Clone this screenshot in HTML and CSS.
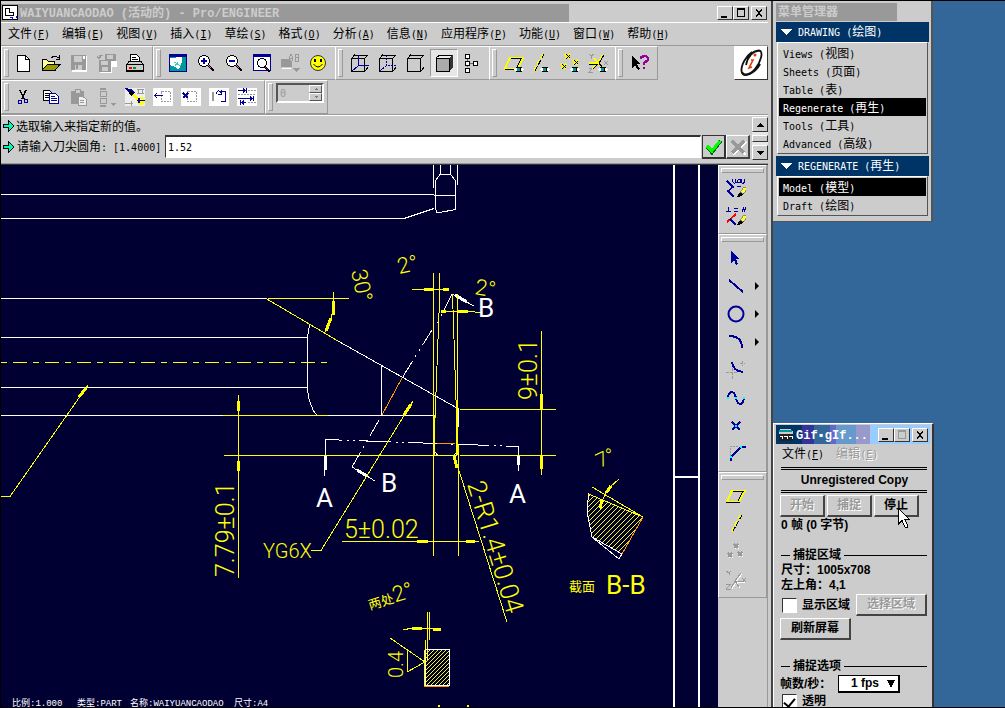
FILE: index.html
```html
<!DOCTYPE html>
<html lang="zh-CN">
<head>
<meta charset="utf-8">
<title>WAIYUANCAODAO - Pro/ENGINEER</title>
<link rel="stylesheet" href="styles.css">
</head>
<body>
<svg class="defs" aria-hidden="true">
  <defs>
    <symbol id="eye" viewBox="0 0 10 7"><path d="M0 3.500L3 1H7L10 3.500L7 6H3Z" fill="#fff"/><path d="M2 1.500H8M2 5.500H8" stroke="#000"/><rect x="3" y="1" width="4" height="5" fill="#000"/><rect x="3" y="2" width="3" height="3" fill="#099"/></symbol>
    <symbol id="pencil" viewBox="0 0 10 10"><path d="M0 10L2 6L5 9Z" fill="#000"/><path d="M2 6L4 4L7 7L4 9Z" fill="#000"/><path d="M3 5L7 0L10 2L6 7Z" fill="#ffff33" stroke="#666" stroke-width=".7"/></symbol>
  </defs>
</svg>
<div class="desktop">
  <main class="window main">
    <header class="title-row">
      <div class="title-bar">
        <svg class="app-icon" viewBox="0 0 16 16"><rect x=".5" y=".5" width="15" height="14" fill="#fff" stroke="#000"/><path d="M3.500 3.500H7.500V7.500H11.500V10.500H3.500Z" fill="none" stroke="#000"/><path d="M7.500 12.500H10.500V14.500M14.500 11V13" fill="none" stroke="#00f"/></svg>
        <h1><span class="mono-b">WAIYUANCAODAO (</span>活动的<span class="mono-b">) - Pro/ENGINEER</span></h1>
      </div>
      <div class="win-buttons">
        <button aria-label="最小化"><svg viewBox="0 0 12 10"><path d="M2 8.500H8" stroke="#000" stroke-width="2"/></svg></button>
        <button aria-label="最大化"><svg viewBox="0 0 12 10"><path d="M2 1H10" stroke="#000" stroke-width="2"/><rect x="2.500" y="1.500" width="7" height="7" fill="none" stroke="#000"/></svg></button>
        <button class="close" aria-label="关闭"><svg viewBox="0 0 12 10"><path d="M3 1.500L9 8.500M9 1.500L3 8.500" stroke="#000" stroke-width="1.500"/></svg></button>
      </div>
    </header>
    <nav class="menu-bar">
      <button>文件<span class="mono">(<u>F</u>)</span></button>
      <button>编辑<span class="mono">(<u>E</u>)</span></button>
      <button>视图<span class="mono">(<u>V</u>)</span></button>
      <button>插入<span class="mono">(<u>I</u>)</span></button>
      <button>草绘<span class="mono">(<u>S</u>)</span></button>
      <button>格式<span class="mono">(<u>O</u>)</span></button>
      <button>分析<span class="mono">(<u>A</u>)</span></button>
      <button>信息<span class="mono">(<u>N</u>)</span></button>
      <button>应用程序<span class="mono">(<u>P</u>)</span></button>
      <button>功能<span class="mono">(<u>U</u>)</span></button>
      <button>窗口<span class="mono">(<u>W</u>)</span></button>
      <button>帮助<span class="mono">(<u>H</u>)</span></button>
    </nav>
    <section class="toolbars">
      <div class="tool-rows">
        <div class="tool-row">
          <div class="group first">
            <button class="tool" aria-label="新建"><svg viewBox="0 0 20 20"><path d="M4.500 2.500H12.500L16.500 6.500V18.500H4.500Z" fill="#fff" stroke="#000"/><path d="M12.500 2.500V6.500H16.500" fill="none" stroke="#000"/></svg></button>
            <button class="tool" aria-label="打开"><svg viewBox="0 0 20 20"><path d="M1.500 16.500V6.500H5.500L7.500 8.500H13.500V11" fill="#ffff99" stroke="#000"/><path d="M1.500 16.500L6.500 11.500H19L14 17.500H2Z" fill="#999900" stroke="#000"/><path d="M10.500 5Q13.500 1 17.500 5M18.500 2V6H15" fill="none" stroke="#000"/></svg></button>
            <button class="tool" aria-label="保存"><svg viewBox="0 0 20 20"><rect x="3" y="3" width="15" height="16" fill="#fff"/><rect x="2" y="2" width="15" height="15" fill="#999"/><rect x="5" y="3" width="8" height="6" fill="#ccc"/><rect x="6" y="12" width="7" height="5" fill="#ccc"/><rect x="7" y="12" width="2" height="4" fill="#999"/><rect x="14" y="3" width="2" height="3" fill="#fff"/></svg></button>
            <button class="tool" aria-label="保存副本"><svg viewBox="0 0 20 20"><rect x="8" y="1" width="11" height="11" fill="#999"/><rect x="10" y="2" width="6" height="4" fill="#ccc"/><rect x="15" y="8" width="5" height="6" fill="#fff"/><rect x="3" y="8" width="12" height="12" fill="#fff"/><rect x="2" y="7" width="12" height="12" fill="#999"/><rect x="4" y="8" width="7" height="4" fill="#ccc"/><rect x="5" y="14" width="6" height="4" fill="#ccc"/><path d="M2 5V2H6M0 3L2 6L4 3" fill="none" stroke="#999"/></svg></button>
            <button class="tool" aria-label="打印"><svg viewBox="0 0 20 20"><path d="M5.500 9.500V1.500H11.500L14.500 4.500V9.500" fill="#fff" stroke="#000"/><path d="M7 4.500H11M7 6.500H13" stroke="#000"/><path d="M1.500 11.500L4 8.500H16L18.500 11.500V17.500H1.500Z" fill="#ccc" stroke="#000"/><path d="M1 11.500H19" stroke="#000"/><path d="M1 17.500H19" stroke="#000" stroke-width="2"/><path d="M4 14.500H7" stroke="#f00" stroke-width="2"/><path d="M8 14.500H11" stroke="#090" stroke-width="2"/></svg></button>
          </div>
          <div class="group">
            <button class="tool" aria-label="重画"><svg viewBox="0 0 20 20"><rect x="1" y="1" width="18" height="18" fill="#099"/><path d="M1 2H19" stroke="#009" stroke-width="3"/><path d="M1.500 2V18.500H18.500V2" fill="none" stroke="#009"/><path d="M2 5L14 4Q15 10 10 17L7 14L2 12Z" fill="#fff"/><path d="M6 9L13 13M10 9L7 13" stroke="#3cc"/></svg></button>
            <button class="tool" aria-label="放大"><svg viewBox="0 0 20 20"><circle cx="8" cy="8" r="5.500" fill="#fff" stroke="#000"/><path d="M5 8H11M8 5V11" stroke="#009" stroke-width="2"/><path d="M12 12L18 18" stroke="#000" stroke-width="2.500"/><path d="M12 12L15 15" stroke="#c6c" stroke-width="1"/></svg></button>
            <button class="tool" aria-label="缩小"><svg viewBox="0 0 20 20"><circle cx="8" cy="8" r="5.500" fill="#fff" stroke="#000"/><path d="M5 8H11" stroke="#009" stroke-width="2"/><path d="M12 12L18 18" stroke="#000" stroke-width="2.500"/><path d="M12 12L15 15" stroke="#c6c" stroke-width="1"/></svg></button>
            <button class="tool" aria-label="重新调整"><svg viewBox="0 0 20 20"><rect x="1.500" y="1.500" width="17" height="16" fill="#fff" stroke="#009"/><path d="M1 2.500H19" stroke="#009" stroke-width="3"/><circle cx="10" cy="10" r="4.500" fill="#fff" stroke="#000"/><path d="M13 14L18 19" stroke="#000" stroke-width="2.500"/><path d="M13 14L16 17" stroke="#909"/></svg></button>
            <button class="tool" aria-label="视图列表"><svg viewBox="0 0 20 20"><path d="M1 6H9L12 8V14H1Z" fill="#999"/><path d="M2 15.500H11" stroke="#fff"/><path d="M9.500 8V4L11 1.500L12.500 4V8M10 5.500H13M15.500 1.500V8M15 1.500H18V4.500H16M18.500 5V8H15" fill="none" stroke="#999"/><path d="M13 15H20L16.500 19Z" fill="#999"/></svg></button>
            <button class="tool" aria-label="笑脸"><svg viewBox="0 0 20 20" class="smooth"><circle cx="10" cy="10" r="7.500" fill="#ff0" stroke="#333"/><rect x="6" y="6" width="2" height="3"/><rect x="12" y="6" width="2" height="3"/><path d="M5.500 11Q10 17 14.500 11" fill="none" stroke="#000"/></svg></button>
          </div>
          <div class="group">
            <button class="tool" aria-label="线框"><svg viewBox="0 0 20 20"><path d="M1.500 5.500H14.500V18.500H1.500ZM1.500 5.500L5 1.500M14.500 5.500L18 2M14.500 18.500L18 14.500M5 2.500H18" fill="none" stroke="#000"/><path d="M8.500 2V12.500H19M8.500 12.500L2 18" fill="none" stroke="#009"/></svg></button>
            <button class="tool" aria-label="隐藏线"><svg viewBox="0 0 20 20"><path d="M1.500 5.500H14.500V18.500H1.500ZM1.500 5.500L5 1.500M14.500 5.500L18 2M14.500 18.500L18 14.500M5 2.500H18" fill="none" stroke="#000"/><path d="M8.500 2V12.500H19M8.500 12.500L2 18" fill="none" stroke="#009" stroke-dasharray="2 1"/></svg></button>
            <button class="tool" aria-label="无隐藏线"><svg viewBox="0 0 20 20"><path d="M1.500 5.500H14.500V18.500H1.500ZM1.500 5.500L5 1.500M14.500 5.500L18 2M14.500 18.500L18 14.500M5 2.500H18" fill="none" stroke="#000"/></svg></button>
            <button class="tool pressed" aria-label="着色"><svg viewBox="0 0 20 20"><path d="M2 5L5 2H18L15 6Z" fill="#eee"/><path d="M15 5L18.500 2V15L15 19Z" fill="#333"/><rect x="2.500" y="5.500" width="13" height="13" fill="#aaa" stroke="#000"/><path d="M2 5L5 2.500H18" fill="none" stroke="#000"/></svg></button>
            <button class="tool" aria-label="模型树"><svg viewBox="0 0 20 20"><path d="M5.500 5V14M5 10.500H13" stroke="#666"/><g fill="#fff" stroke="#000"><rect x="3.500" y="1.500" width="4" height="4"/><rect x="3.500" y="8.500" width="4" height="4"/><rect x="3.500" y="15.500" width="4" height="4"/><rect x="11.500" y="8.500" width="4" height="4"/></g></svg></button>
          </div>
          <div class="group">
            <button class="tool" aria-label="基准平面"><svg viewBox="0 0 20 20"><path d="M6 4.500H19L14 15.500H1Z" fill="none" stroke="#ff0" stroke-width="2"/><path d="M7 5.500H18M1 16.500H11M13 14L17 6" fill="none" stroke="#000"/><use href="#eye" x="10" y="13" width="10" height="7"/></svg></button>
            <button class="tool" aria-label="基准轴"><svg viewBox="0 0 20 20"><path d="M11 1L1 20" stroke="#ff0" stroke-width="2" stroke-dasharray="5 2"/><path d="M12 1L2 20" stroke="#000" stroke-dasharray="5 2"/><use href="#eye" x="8" y="13" width="10" height="7"/></svg></button>
            <button class="tool" aria-label="基准点"><svg viewBox="0 0 20 20"><g id="marks"><path d="M5 1L10 6M10 1L5 6M13 7L18 12M18 7L13 12M1 11L6 16M6 11L1 16" stroke="#ff0" stroke-width="2.500"/><path d="M6 1L10 5M10 2L6 6M14 7L18 11M18 8L14 12M2 11L6 15M6 12L2 16" stroke="#000"/></g><use href="#eye" x="10" y="13" width="10" height="7"/></svg></button>
            <button class="tool" aria-label="坐标系"><svg viewBox="0 0 20 20"><path d="M1 1L3 3L6 1M3 3V6M16 8L20 12M20 8L16 12M1 15H5L1 19H5" fill="none" stroke="#999"/><path d="M10 10H1M10 10L15 2M10 10L4 16M10 10L14 15M10 10L6 5" stroke="#ff0" stroke-width="2"/><path d="M9 11H1M11 10L16 2M10 11L5 16M11 10L14 14" stroke="#000"/><use href="#eye" x="10" y="13" width="10" height="7"/></svg></button>
          </div>
          <div class="group">
            <button class="tool" aria-label="上下文帮助"><svg viewBox="0 0 20 20"><path d="M2 3V15L5 12L8 17L10 16L7 11H11Z" fill="#000"/><path d="M11 6V4H13V3H16L18 5V7L14 10V12M14 13.500V16" fill="none" stroke="#909" stroke-width="2.500"/></svg></button>
          </div>
        </div>
        <div class="tool-row">
          <div class="group first">
            <button class="tool" aria-label="剪切"><svg viewBox="0 0 20 20"><path d="M7 3L11 12M13 3L9 12" stroke="#000" stroke-width="1.500"/><circle cx="7" cy="15" r="2" fill="none" stroke="#009"/><circle cx="13" cy="14" r="2" fill="none" stroke="#009"/></svg></button>
            <button class="tool" aria-label="复制"><svg viewBox="0 0 20 20"><path d="M2.500 3.500H8.500L10.500 5.500V13.500H2.500Z" fill="#fff" stroke="#000"/><path d="M4 6.500H8M4 8.500H8M4 10.500H8" stroke="#000"/><path d="M8.500 6.500H14.500L17.500 9.500V16.500H8.500Z" fill="#fff" stroke="#009"/><path d="M10 9.500H14M10 11.500H16M10 13.500H16" stroke="#009"/></svg></button>
            <button class="tool" aria-label="粘贴"><svg viewBox="0 0 20 20"><rect x="2" y="4" width="13" height="13" rx="1" fill="#999"/><rect x="6" y="2" width="5" height="4" fill="#ccc" stroke="#999"/><path d="M9.500 9.500H14L17.500 12.500V18.500H9.500Z" fill="#eee" stroke="#999"/><path d="M11 13.500H15M11 15.500H15" stroke="#999"/></svg></button>
            <button class="tool" aria-label="选取过滤"><svg viewBox="0 0 20 20"><path d="M3 1.500H9M3 18.500H9" stroke="#999" stroke-width="2"/><rect x="3.500" y="4.500" width="6" height="5" rx="1" fill="none" stroke="#999" stroke-width="1.500"/><rect x="3.500" y="11.500" width="6" height="5" rx="1" fill="none" stroke="#999" stroke-width="1.500"/><path d="M13 16H19L16 19Z" fill="#999"/></svg></button>
            <button class="tool" aria-label="显示"><svg viewBox="0 0 20 20"><rect y="1" width="20" height="18" fill="#eee"/><path d="M6 6L17 16" stroke="#ff0" stroke-width="3"/><path d="M0 1L6 2L10 6L6 8Z" fill="#009"/><path d="M5 5L8 8" stroke="#000" stroke-width="3"/><path d="M12 2.500H19M12 6.500H19M13 3V6M17 3V6" stroke="#999"/><circle cx="16" cy="14" r="3" fill="none" stroke="#ff0" stroke-width="2"/><path d="M12 13.500H20M14 11V16" stroke="#009" stroke-width="1.500"/><path d="M0 16.500H8M6 14V19" stroke="#999"/></svg></button>
            <button class="tool" aria-label="移动"><svg viewBox="0 0 20 20"><rect y="1" width="20" height="18" fill="#fff"/><rect x="8.500" y="4.500" width="9" height="10" fill="none" stroke="#999" stroke-dasharray="2 1"/><path d="M2 8.500H10M4 6L1.500 8.500L4 11" fill="none" stroke="#009"/></svg></button>
            <button class="tool" aria-label="删除"><svg viewBox="0 0 20 20"><rect y="1" width="20" height="18" fill="#fff"/><rect x="6.500" y="4.500" width="9" height="10" fill="none" stroke="#999" stroke-dasharray="2 1"/><path d="M2 6L7 11M7 6L2 11" stroke="#009" stroke-width="1.500"/></svg></button>
            <button class="tool" aria-label="切换视图"><svg viewBox="0 0 20 20"><rect y="1" width="20" height="18" fill="#fff"/><path d="M3.500 5V14" stroke="#999" stroke-width="2"/><path d="M7 6.500Q9 2 12 5.500M12.500 3V7.500H9M13 4.500H16.500V14.500H12" fill="none" stroke="#009"/></svg></button>
            <button class="tool" aria-label="整理尺寸"><svg viewBox="0 0 20 20"><rect y="1" width="20" height="18" fill="#fff"/><path d="M11 3.500H19M1 7.500H19M11 15.500H19" stroke="#999" stroke-dasharray="2 1"/><path d="M1 3.500H9M9.500 1V6M1 11.500H17M16.500 9V14M4 15.500H9M3.500 13V18" stroke="#009"/><path d="M6 1L9 3.500L6 6ZM13 9L16 11.500L13 14ZM7 13L4 15.500L7 18Z" fill="#009"/></svg></button>
          </div>
          <div class="group spin-group">
            <label class="spinner"><input class="mono" type="text" value="0" disabled aria-label="页码"><span class="spin"><button disabled aria-label="增加"><svg viewBox="0 0 6 4"><path d="M3 1L5 3H1Z" fill="#777"/></svg></button><button disabled aria-label="减少"><svg viewBox="0 0 6 4"><path d="M3 3L5 1H1Z" fill="#777"/></svg></button></span></label>
          </div>
        </div>
      </div>
      <button class="logo" aria-label="Pro/ENGINEER"><svg class="smooth" viewBox="0 0 32 32"><path d="M11 18C13 9 18 4 24 3.500C29 4 26 15 20 22C14 29 7 30 6.500 24C6 18 11 9 17 5" fill="none" stroke="#111" stroke-width="1.800"/><path d="M7 25C9 31 20 26 25 17" fill="none" stroke="#111" stroke-width="2.200"/><path d="M16 13L18 13L14 21L17 20" fill="none" stroke="#e63c00" stroke-width="1.600"/><circle cx="20" cy="8" r="1.500" fill="#e63c00"/></svg></button>
    </section>
    <section class="message">
      <div class="message-body">
        <p><svg class="arrow" viewBox="0 0 12 12"><path d="M.5 4.500H5.500V.8L11 6L5.500 11.200V7.500H.5Z" fill="#00ff99" stroke="#003"/></svg>选取输入来指定新的值。</p>
        <form class="prompt">
          <label for="radius"><svg class="arrow" viewBox="0 0 12 12"><path d="M.5 4.500H5.500V.8L11 6L5.500 11.200V7.500H.5Z" fill="#00ff99" stroke="#003"/></svg><span class="prompt-text">请输入刀尖圆角<span class="mono">: [1.4000]</span></span></label>
          <input id="radius" class="mono" type="text" value="1.52">
          <button type="button" class="accept" aria-label="接受"><svg viewBox="0 0 20 20"><path d="M3 10L8 16L17 4" fill="none" stroke="#060" stroke-width="3"/><path d="M3 9L8 14L16 4" fill="none" stroke="#0f0" stroke-width="3"/></svg></button>
          <button type="button" aria-label="取消"><svg viewBox="0 0 20 20"><path d="M5 5L18 18M18 5L5 18" stroke="#fff" stroke-width="2"/><path d="M4 4L16 16M16 4L4 16" stroke="#999" stroke-width="3"/></svg></button>
        </form>
      </div>
      <div class="scroll">
        <button aria-label="向上"><svg viewBox="0 0 10 6"><path d="M5 1L9 5H1Z"/></svg></button>
        <span class="thumb"></span>
        <button aria-label="向下"><svg viewBox="0 0 10 6"><path d="M5 5L9 1H1Z"/></svg></button>
      </div>
    </section>
    <section class="work">
      <div class="canvas">
        <svg role="img" aria-label="工程图">
          <defs>
            <pattern id="hatch" width="4" height="4" patternUnits="userSpaceOnUse"><path d="M-1 1L1 -1M0 4L4 0M3 5L5 3" stroke="#ff0"/></pattern>
            <pattern id="hatch2" width="5" height="5" patternUnits="userSpaceOnUse"><path d="M-1 1L1 -1M0 5L5 0M4 6L6 4" stroke="#ff0"/></pattern>
          </defs>
          <g transform="translate(-1 -165)">
            <g class="white">
              <path d="M1 194.500H434M1 218.500H404L434 208.500M1 298.500H266M1 337.500H307M1 387.500H307M1 415.500H433"/>
              <path d="M433.500 165V188M457.500 165V185M440.500 165V174.500H451M450.500 165V174L455 180L456 188L455.500 209.500L437 213L435.500 209V186L436 180L440 174.500M434 195.500H456"/>
              <path d="M309.500 325L307.500 337V387L308.500 398L313 410L317 415.500M338 341L457 408M381.500 366V415"/>
              <path d="M452 294L436 326M432 330L402 378" stroke-dasharray="18 5 2 5 2 5"/><path d="M379 420L352 467" stroke-dasharray="18 5 2 5 2 5"/>
              <path d="M325.500 455V439.500L519 446.500" stroke-dasharray="32 5 2 4 2 4"/>
              <path d="M324.500 455V476M518.500 446V471M352 467L375 481M452 294L474 306M435 452L438 455.500H454L457 452M456.500 408V428"/>
              <path d="M325 455V470M518 455V465M357 470L367 476M455 295L467 302M457 408V427" class="thick"/>
              <path d="M674 165V707M699 165V707M674 477H699" class="bold"/>
            </g>
            <path class="orange" d="M402 378L382 415M437 443.500H455M643 517L622 554M424 686.500H449"/>
            <g class="yellow">
              <path d="M1 362.500H327" stroke-dasharray="14 6 6 6" stroke-dashoffset="20"/>
              <path d="M268 298.500H349M266 298.500L338 341M333.500 292V303Q333 318 325 332M223 415.500H328M1 496.500H10L88 385"/>
              <path d="M238.500 395V578M224 455.500H457M460 455.500H556M541.500 331V475M460 409.500H556"/>
              <path d="M433.500 273V556M439.500 273V300L434 445M452.500 294L457 430M457.500 294V445M458.500 445V556"/>
              <path d="M412 289.500H449M441 311.500H468L482 312.500M311 550.500H321L413 401M342 541.500H479M454 455L507 622"/>
              <path d="M592 487L643 517M619 479L610 487Q602 497 600 510"/>
              <path d="M427.500 612V660M429.500 612V640M403 630L412 628H430L441 630M390 638L425 662L407 672V650M426 640L424 686"/>
              <path class="thick" d="M333 301V315M331 318L326 331M79 397L86 388M238 401V411M238 461V471M541 394V409M541 456V469M424 289H434M443 289.500H449M441 311.500H446M458 311H468M404 415L411 404M417 541H428M466 541H475M454 456L457 468M611 486L606 493M602 500L600 508M412 628H422M433 629H441"/>
              <path class="bold" d="M434 415V455M457 427V455M425 650V686M438 706H440M467 706H469"/>
            </g>
            <path class="white section" d="M588.500 494L643 517L622 554L592 537L587 512Z"/>
            <path class="white" d="M592 537L619 559L622 554"/>
            <path class="yellow" d="M588.500 494L643 517"/><path class="orange" d="M643 517L622 554"/>
            <rect class="white tip" x="425.500" y="649.500" width="24" height="36"/>
            <g class="note">
              <text transform="translate(399 274) rotate(-12)" class="angle">2°</text>
              <text transform="translate(474 294) rotate(10)" class="angle">2°</text>
              <text transform="translate(351 271) rotate(78)" class="angle">30°</text>
              <text transform="translate(537 400) rotate(-90)">9±0.1</text>
              <text transform="translate(234 577) rotate(-90)">7.79±0.1</text>
              <text x="344" y="538">5±0.02</text>
              <text x="263" y="558" class="small">YG6X</text>
              <text transform="translate(467 484) rotate(73)" class="long">2-R1.4±0.04</text>
              <text transform="translate(600 468) rotate(-25)" class="small">7°</text>
              <text transform="translate(370 610) rotate(-17)" class="angle"><tspan class="cjk">两处</tspan>2°</text>
              <text transform="translate(403 678) rotate(-90)" class="small">0.4</text>
              <text x="569" y="591" class="cjk">截面</text>
              <text x="606" y="594" class="mark">B-B</text>
            </g>
            <g class="note letters">
              <text x="478" y="317" class="mark">B</text>
              <text x="381" y="492" class="mark">B</text>
              <text x="316" y="507" class="mark">A</text>
              <text x="509" y="503" class="mark">A</text>
            </g>
            <g class="status">
              <text x="12" y="706">比例:1.000</text>
              <text x="77" y="706">类型:PART</text>
              <text x="130" y="706">名称:WAIYUANCAODAO</text>
              <text x="234" y="706">尺寸:A4</text>
            </g>
          </g>
        </svg>
      </div>
      <aside class="side-tools">
        <div class="vgroup sketch">
          <button class="tool" aria-label="草绘"><svg viewBox="0 0 20 20"><path d="M1 3L7 9L2 13L8 19" fill="none" stroke="#009" stroke-width="1.500"/><path d="M7 1Q6 4 9 6M10 1Q8 4 11 5M18 1Q20 4 16 6M15 1Q17 4 14 5M11 8H15" fill="none" stroke="#009"/><circle cx="13" cy="3" r="1.500" fill="none" stroke="#009"/><use href="#pencil" x="11" y="9" width="10" height="10"/></svg></button>
          <button class="tool" aria-label="约束"><svg viewBox="0 0 20 20"><path d="M2.500 1V5M0 5.500H5M8 2.500H12M8 5.500H12M16 6L18 1M18 6L20 1" stroke="#009"/><path d="M1 16L10 8" stroke="#f00" stroke-width="1.800"/><path d="M4 13L10 19" stroke="#009" stroke-width="1.500"/><use href="#pencil" x="11" y="9" width="10" height="10"/></svg></button>
        </div>
        <div class="vgroup">
          <button class="tool" aria-label="选取"><svg viewBox="0 0 20 20"><path d="M5 2V15L8 12L10 17L12 16L10 11H13Z" fill="#009"/></svg></button>
          <div class="pair"><button class="tool" aria-label="直线"><svg viewBox="0 0 20 20"><path d="M3 4L17 16" stroke="#009" stroke-width="2"/></svg></button><button class="more" aria-label="更多直线"></button></div>
          <div class="pair"><button class="tool" aria-label="圆"><svg viewBox="0 0 20 20" class="smooth"><circle cx="10" cy="10" r="7.500" fill="none" stroke="#009" stroke-width="2"/></svg></button><button class="more" aria-label="更多圆"></button></div>
          <div class="pair"><button class="tool" aria-label="圆弧"><svg viewBox="0 0 20 20"><path d="M3 4Q16 4 16 16" fill="none" stroke="#009" stroke-width="2"/></svg></button><button class="more" aria-label="更多圆弧"></button></div>
          <button class="tool" aria-label="圆角"><svg viewBox="0 0 20 20"><path d="M6 2Q7 11 17 12" fill="none" stroke="#009" stroke-width="2"/><path d="M14 3.500H19M16.500 1V6M0 12.500H12M6.500 8V20" stroke="#999" stroke-dasharray="3 1"/></svg></button>
          <button class="tool" aria-label="样条"><svg viewBox="0 0 20 20"><path d="M2 10C3 2 8 2 10 10C12 18 17 18 18 10" fill="none" stroke="#009" stroke-width="2"/><path d="M1 9H3V11H1ZM9 9H11V11H9ZM17 9H19V11H17Z" fill="#0ff"/></svg></button>
          <button class="tool" aria-label="点"><svg viewBox="0 0 20 20"><path d="M6 6L14 14M14 6L6 14" stroke="#009" stroke-width="2"/><rect x="9" y="9" width="2" height="2" fill="#0ff"/></svg></button>
          <button class="tool" aria-label="边"><svg viewBox="0 0 20 20"><path d="M4.500 12V2.500H13" fill="none" stroke="#999" stroke-dasharray="2 1"/><path d="M5 17V13L15 3H20" fill="none" stroke="#009" stroke-width="2"/><path d="M4 12H6V14H4ZM14 2H16V4H14Z" fill="#0ff"/></svg></button>
        </div>
        <div class="vgroup">
          <button class="tool" aria-label="平面"><svg viewBox="0 0 20 20"><path d="M6 4.500H19L13 15.500H1Z" fill="none" stroke="#ff0" stroke-width="2"/><path d="M7 5.500H17L12 14.500M14 16.500H0" fill="none" stroke="#000"/></svg></button>
          <button class="tool" aria-label="轴"><svg viewBox="0 0 20 20"><path d="M15 1L5 19" stroke="#ff0" stroke-width="2.500" stroke-dasharray="5 2"/><path d="M16 1L6 19" stroke="#000" stroke-dasharray="5 2"/></svg></button>
          <button class="tool" aria-label="点阵"><svg viewBox="0 0 20 20"><path d="M9 3L13 7M13 3L9 7M3 12L7 16M7 12L3 16M13 11L17 15M17 11L13 15" stroke="#fff" stroke-width="1"/><path d="M8 2L12 6M12 2L8 6M2 11L6 15M6 11L2 15M12 10L16 14M16 10L12 14" stroke="#999" stroke-width="1.500"/></svg></button>
          <button class="tool" aria-label="坐标"><svg viewBox="0 0 20 20"><path d="M10 12L16 4M10 12L6 19M10 12H19M10 12L14 18" stroke="#fff" stroke-width="1"/><path d="M0 1L3 3L5 1M3 3V5M16 8L20 12M20 8L16 12M0 14H5L0 19H5M9 11L15 3M9 11L5 18M9 11H18M9 11L13 17" fill="none" stroke="#999"/></svg></button>
        </div>
      </aside>
    </section>
  </main>
  <div class="side">
    <section class="window manager">
      <h2>菜单管理器</h2>
      <h3><svg viewBox="0 0 12 6"><path d="M0 0H12L6 6Z" fill="#fff"/></svg><span><span class="mono">DRAWING (</span>绘图<span class="mono">)</span></span></h3>
      <div class="options">
        <button><span class="mono">Views (</span>视图<span class="mono">)</span></button>
        <button><span class="mono">Sheets (</span>页面<span class="mono">)</span></button>
        <button><span class="mono">Table (</span>表<span class="mono">)</span></button>
        <button class="on"><span class="mono">Regenerate (</span>再生<span class="mono">)</span></button>
        <button><span class="mono">Tools (</span>工具<span class="mono">)</span></button>
        <button><span class="mono">Advanced (</span>高级<span class="mono">)</span></button>
      </div>
      <h3><svg viewBox="0 0 12 6"><path d="M0 0H12L6 6Z" fill="#fff"/></svg><span><span class="mono">REGENERATE (</span>再生<span class="mono">)</span></span></h3>
      <div class="options">
        <button class="on"><span class="mono">Model (</span>模型<span class="mono">)</span></button>
        <button><span class="mono">Draft (</span>绘图<span class="mono">)</span></button>
      </div>
    </section>
    <section class="window gif">
      <header class="gif-title">
        <svg class="app-icon" viewBox="0 0 16 16"><path d="M2 2H12L15 4V14H1V4Z" fill="#ccc"/><path d="M1 3.500H14" stroke="#099" stroke-width="2"/><path d="M1 7H15V14H1Z" fill="#222"/><path d="M2 9H4V12M6 9H9V12M11 9H14V12" fill="none" stroke="#fff"/></svg>
        <h2><span class="mono-b">Gif▪gIf...</span></h2>
        <div class="win-buttons">
          <button aria-label="最小化"><svg viewBox="0 0 12 10"><path d="M2 8.500H8" stroke="#000" stroke-width="2"/></svg></button>
          <button disabled aria-label="最大化"><svg viewBox="0 0 12 10"><path d="M2 1H10" stroke="#999" stroke-width="2"/><rect x="2.500" y="1.500" width="7" height="7" fill="none" stroke="#999"/></svg></button>
          <button class="close" aria-label="关闭"><svg viewBox="0 0 12 10"><path d="M3 1.500L9 8.500M9 1.500L3 8.500" stroke="#000" stroke-width="1.500"/></svg></button>
        </div>
      </header>
      <nav class="menu-bar gif-menu"><button>文件<span class="mono">(<u>F</u>)</span></button><button disabled>编辑<span class="mono">(<u>E</u>)</span></button></nav>
      <div class="gif-body">
        <p class="copy">Unregistered Copy</p>
        <div class="actions"><button disabled>开始</button><button disabled>捕捉</button><button>停止<svg class="cursor" viewBox="0 0 12 20"><path d="M.5 .5V16L4 12.500L7 19H9.500V17L7 11.500H11.500Z" fill="#fff" stroke="#000"/></svg></button></div>
        <p>0 帧 (0 字节)</p>
        <fieldset>
          <legend>捕捉区域</legend>
          <p>尺寸：1005x708</p>
          <p>左上角：4,1</p>
          <div class="line"><label class="check"><input type="checkbox">显示区域</label><button class="wide" disabled>选择区域</button></div>
          <button class="wide">刷新屏幕</button>
        </fieldset>
        <fieldset class="settings">
          <legend>捕捉选项</legend>
          <div class="rate"><label for="fps">帧数/秒：</label><span class="pick"><select id="fps"><option>1 fps</option></select><svg viewBox="0 0 8 8"><path d="M0 0H8L4 8Z"/></svg></span></div>
          <label class="check"><input type="checkbox" checked>透明</label>
        </fieldset>
      </div>
    </section>
  </div>
</div>
</body>
</html>
```
FILE: styles.css
```css
* { box-sizing: border-box; }
body { margin: 0; background: #336699; color: #000; font: 12px/18px "Noto Sans CJK SC", sans-serif; }
h1, h2, h3, p { margin: 0; font-size: 12px; font-weight: 400; }
button { margin: 0; padding: 0; border: 0; background: none; color: inherit; font: inherit; white-space: nowrap; }
svg { display: block; shape-rendering: crispEdges; }
.smooth { shape-rendering: auto; }
.defs { position: absolute; width: 0; height: 0; }
.mono { font-family: "DejaVu Sans Mono", monospace; font-size: 10px; white-space: pre; }
.mono-b { font-family: "Liberation Mono", monospace; font-size: 12px; font-weight: 700; white-space: pre; }

.desktop { display: flex; height: 100vh; overflow: hidden; border-top: 1px solid #000; border-bottom: 1px solid #000; border-left: 1px solid #000; }
.window { background: #ccc; }
.main { flex: 1; min-width: 0; display: flex; flex-direction: column; padding: 2px 3px 0 0; border-right: 2px solid #444; }

.title-row { display: flex; justify-content: space-between; align-items: center; height: 20px; border-bottom: 1px solid #fff; flex: none; }
.title-bar { display: flex; align-items: center; width: 74%; height: 18px; background: #999; color: #ccc; gap: 2px; padding-left: 1px; }
.title-bar h1 { font-weight: 700; white-space: nowrap; line-height: 16px; }
.app-icon { width: 16px; height: 16px; flex: none; }
.win-buttons { display: flex; flex: none; }
.win-buttons button { width: 16px; height: 14px; display: grid; place-items: center; background: #ccc; border: 1px solid; border-color: #fff #333 #333 #fff; }
.win-buttons svg { width: 12px; height: 10px; }
.win-buttons .close { margin-left: 2px; }
.main .win-buttons { padding-right: 1px; }

.menu-bar { display: flex; gap: 12px; height: 22px; align-items: center; padding-left: 7px; flex: none; }
.menu-bar button:disabled { color: #999; text-shadow: 1px 1px #fff; }

.toolbars { display: flex; justify-content: space-between; align-items: flex-start; height: 70px; border-top: 1px solid #999; border-bottom: 1px solid #999; flex: none; }
.tool-row { display: flex; height: 34px; }
.group { position: relative; display: flex; align-items: center; padding: 0 3px 0 10px; border: 1px solid; border-color: #fff #999 #999 #fff; }
.group + .group { margin-right: -1px; }
.group.first { padding-left: 7px; }
.group::before { content: ""; position: absolute; left: 2px; top: 2px; bottom: 2px; width: 3px; border: 1px solid; border-color: #fff #999 #999 #fff; }
.tool { width: 28px; height: 28px; display: grid; place-items: center; flex: none; }
.tool svg { width: 20px; height: 20px; }
.pressed { background: #e6e6e6; border: 1px solid; border-color: #999 #fff #fff #999; }
.spin-group { align-items: flex-start; }
.spinner { display: flex; width: 48px; height: 20px; margin-top: 2px; border: 2px solid; border-color: #555 #fff #fff #555; }
.spinner input { flex: 1; min-width: 0; padding: 0 2px; border: 0; background: #ccc; color: #999; }
.spin { display: flex; flex-direction: column; width: 13px; }
.spin button { flex: 1; display: grid; place-items: center; border: 1px solid; border-color: #fff #555 #555 #fff; }
.spin svg { width: 6px; height: 4px; }
.logo { width: 34px; height: 34px; background: #fff; border: 1px solid; border-color: #fff #333 #333 #fff; }
.logo svg { width: 32px; height: 32px; }

.message { display: flex; gap: 2px; height: 49px; padding: 1px 0 3px; border-top: 1px solid #fff; border-bottom: 1px solid #999; flex: none; }
.message-body { flex: 1; min-width: 0; }
.message p { display: flex; align-items: center; gap: 1px; height: 18px; padding-left: 2px; }
.arrow { width: 12px; height: 12px; flex: none; }
.prompt { display: flex; height: 24px; align-items: stretch; }
.prompt label { display: flex; align-items: center; width: 164px; padding-left: 2px; gap: 2px; flex: none; white-space: nowrap; }
.prompt input { flex: 1; min-width: 0; height: 23px; margin-right: 1px; padding: 0 2px; border: 1px solid; border-color: #333 #fff #fff #333; border-top-width: 2px; background: #fff; }
.prompt button { width: 24px; height: 24px; display: grid; place-items: center; border: 1px solid; border-color: #fff #444 #444 #fff; border-right-width: 2px; border-bottom-width: 2px; }
.prompt button svg { width: 20px; height: 20px; }
.prompt .accept { border-color: #333; }
.scroll { display: flex; flex-direction: column; justify-content: space-between; width: 16px; background: #e6e6e6; }
.scroll button { width: 16px; height: 15px; display: grid; place-items: center; background: #ccc; border: 1px solid; border-color: #fff #333 #333 #fff; }
.scroll svg { width: 10px; height: 6px; }
.thumb { height: 7px; background: #ccc; border: 1px solid; border-color: #fff #333 #333 #fff; }

.work { flex: 1; min-height: 0; display: flex; border-top: 1px solid #333; }
.canvas { flex: 1; min-width: 0; background: #000033; overflow: hidden; }
.canvas svg { width: 100%; height: 100%; }
.white, .yellow, .orange { fill: none; stroke: #fff; stroke-width: 1; }
.yellow { stroke: #ff0; }
.orange { stroke: #f90; }
.section { fill: url(#hatch2); }
.tip { fill: url(#hatch); }
.thick { stroke-width: 3; }
.bold { stroke-width: 2; }
.note { fill: #ff0; font: 300 25px Roboto, sans-serif; }
.note .small { font-size: 20px; }
.note .angle { font-size: 22px; }
.note .long { font-size: 26px; }
.note .cjk { font: 400 13px "Noto Sans CJK SC", sans-serif; }
.note .mark { font: 400 26px Roboto, sans-serif; }
.letters { fill: #fff; }
.status { fill: #fff; font: 9px "Liberation Mono", "Noto Sans CJK SC", monospace; }

.side-tools { width: 50px; flex: none; border-right: 1px solid #999; }
.vgroup { position: relative; display: flex; flex-direction: column; padding: 9px 0 3px 3px; border: 1px solid; border-color: #fff #999 #999 #fff; }
.vgroup.sketch { padding-top: 8px; }
.vgroup::before { content: ""; position: absolute; left: 2px; right: 2px; top: 2px; height: 3px; border: 1px solid; border-color: #fff #999 #999 #fff; }
.pair { display: flex; align-items: center; }
.more { width: 14px; height: 28px; display: grid; place-items: center; }
.more::before { content: ""; border: 4px solid transparent; border-left-color: #000; border-right: 0; }

.side { width: 232px; flex: none; display: flex; flex-direction: column; align-items: flex-start; gap: 201px; }
.manager { width: 160px; padding: 2px 2px 3px 3px; border-right: 2px solid #555; border-bottom: 1px solid #555; flex: none; }
.manager h2 { width: 121px; height: 18px; padding-left: 2px; background: #999; color: #ccc; font-weight: 700; line-height: 16px; margin-bottom: 1px; }
.manager h3 { display: flex; align-items: center; gap: 6px; height: 20px; padding-left: 4px; background: #003366; color: #fff; }
.manager h3 svg { width: 12px; height: 6px; }
.options { display: flex; flex-direction: column; margin: 0 1px 2px 1px; border: 1px solid; border-color: #fff #555 #555 #fff; padding: 1px; }
.options button { height: 18px; padding-left: 4px; text-align: left; line-height: 18px; }
.options .on { background: #000; color: #fff; }

.gif { width: 161px; border: 1px solid; border-color: #fff #333 #333 #fff; border-right-width: 2px; padding: 1px 2px 0 2px; flex: none; }
.gif-title { display: flex; align-items: center; height: 19px; padding: 0 2px; gap: 2px; background: linear-gradient(90deg, #003366 26px, #333399 26px 38px, #336699 38px 54px, #6666cc 54px 60px, #6699cc 60px 80px, #9999cc 80px 94px, #99ccff 94px); color: #fff; }
.gif-title h2 { flex: 1; line-height: 16px; }
.gif-menu { height: 20px; padding-left: 6px; }
.gif-body { padding: 3px 3px 0 4px; font: 700 12px/15px "Liberation Sans", "Noto Sans CJK SC", sans-serif; }
.gif-body p { font-weight: 700; padding-left: 1px; }
.gif-body .copy { margin-left: 1px; height: 26px; line-height: 20px; text-align: center; border-top: 3px double #000; border-bottom: 3px double #000; }
.actions { display: flex; gap: 2px; margin: 2px 0 1px; }
.gif-body button { position: relative; height: 22px; background: #ccc; border: 1px solid; border-color: #fff #444 #444 #fff; border-right-width: 2px; border-bottom-width: 2px; }
.gif-body button:disabled { color: #999; text-shadow: 1px 1px #fff; }
.actions button { width: 45px; }
.cursor { position: absolute; left: 23px; top: 12px; width: 12px; height: 20px; }
fieldset { margin: 15px 0 0; padding: 0; border: 0; min-width: 0; }
legend { display: flex; align-items: center; gap: 3px; width: 100%; padding: 0 0 0 1px; }
legend::before, legend::after { content: ""; width: 9px; height: 1px; background: #000; }
legend::after { flex: 1; }
.line { display: flex; justify-content: space-between; margin: 1px 0 2px; }
.check { display: flex; align-items: center; gap: 5px; padding-left: 2px; white-space: nowrap; }
.check input { appearance: none; width: 15px; height: 15px; margin: 0; background: #fff; border: 1px solid; border-color: #333 #fff #fff #333; display: grid; place-items: center; }
.check input:checked::before { content: ""; width: 5px; height: 9px; border: solid #000; border-width: 0 2px 2px 0; transform: rotate(40deg); }
.wide { width: 71px; }
.settings { margin-top: 19px; }
.rate { display: flex; align-items: center; justify-content: space-between; padding-right: 27px; height: 20px; white-space: nowrap; }
.pick { position: relative; }
.pick select { display: block; appearance: none; width: 62px; height: 18px; padding: 0 0 0 12px; margin: 0; border: 1px solid #000; border-right-width: 2px; border-bottom-width: 2px; border-radius: 0; background: #fff; color: #000; font: inherit; }
.pick svg { position: absolute; right: 5px; top: 5px; width: 8px; height: 8px; pointer-events: none; }
```
